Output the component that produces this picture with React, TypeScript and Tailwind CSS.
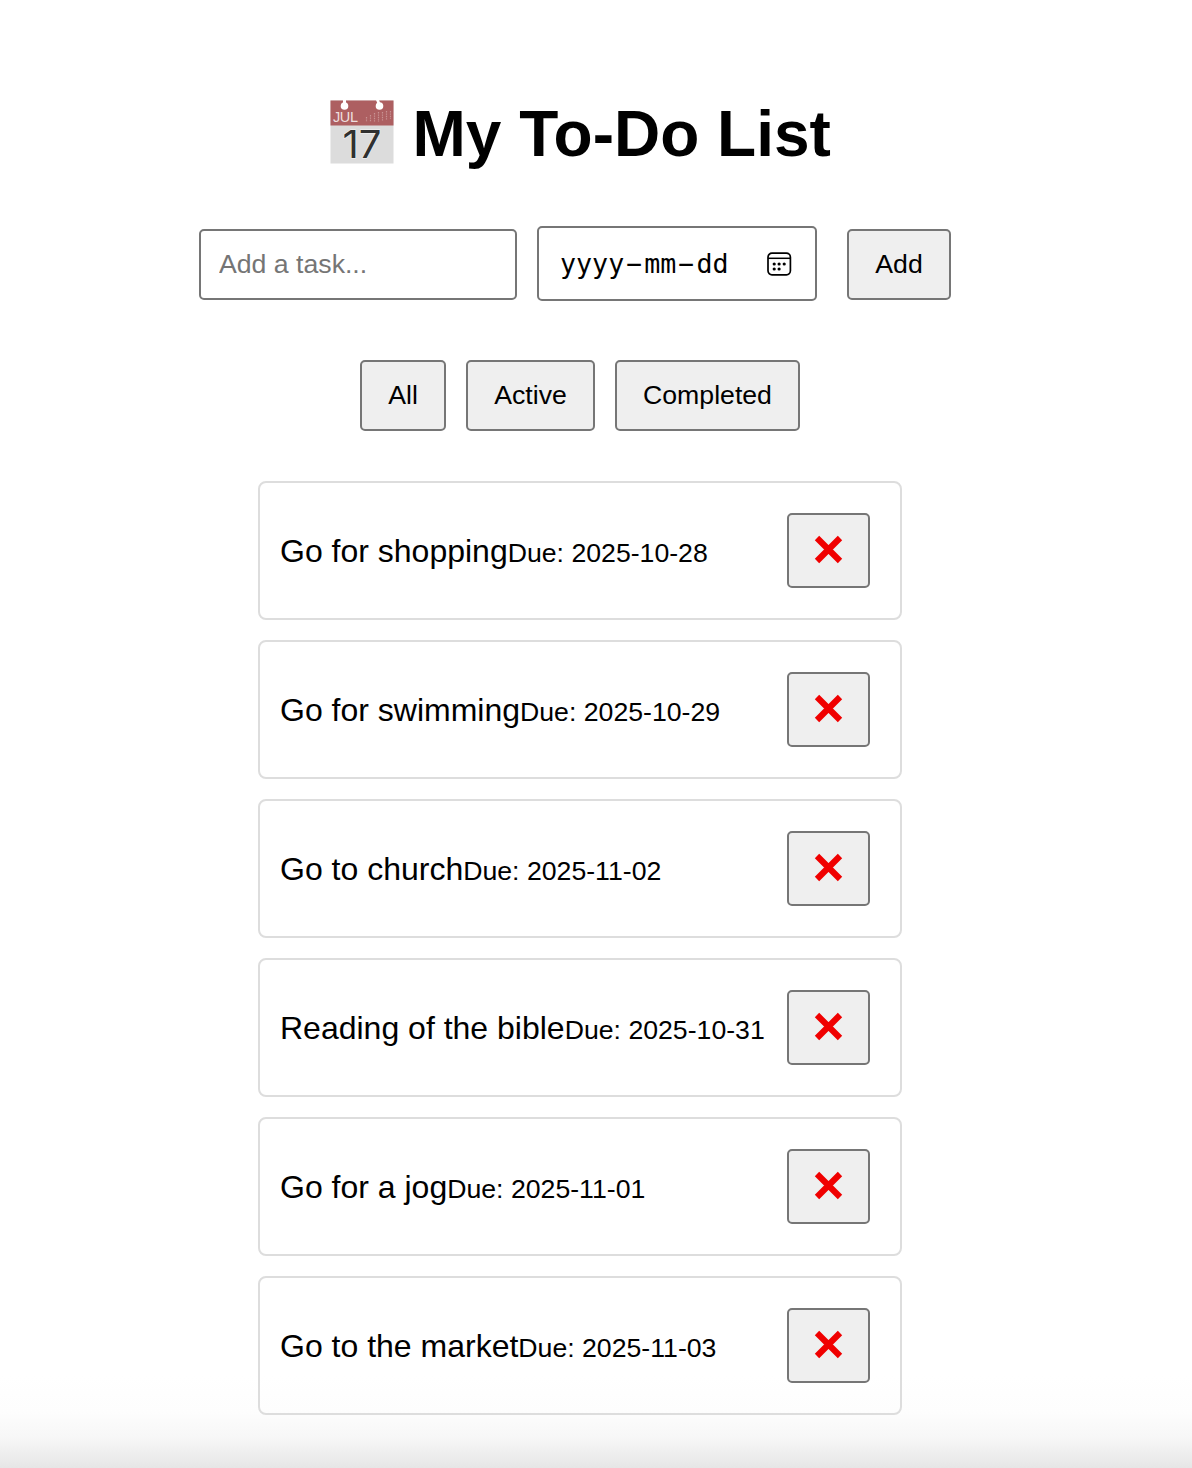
import React from "react";

const tasks = [
  { title: "Go for shopping", due: "2025-10-28" },
  { title: "Go for swimming", due: "2025-10-29" },
  { title: "Go to church", due: "2025-11-02" },
  { title: "Reading of the bible", due: "2025-10-31" },
  { title: "Go for a jog", due: "2025-11-01" },
  { title: "Go to the market", due: "2025-11-03" },
];

const buttonBase =
  "flex shrink-0 items-center justify-center rounded-[5px] border-2 border-[#767676] bg-[#efefef] pb-0.5 text-[26.67px] leading-[30px] text-black";

function CalendarBadge() {
  return (
    <svg className="mt-[10px] h-16 w-16 shrink-0 font-normal leading-none" viewBox="0 0 64 64" aria-hidden="true">
      <rect x="0.5" y="0.5" width="63" height="63" fill="#dcdcdc" />
      <rect x="0.5" y="0.5" width="63" height="25" fill="#ad5f61" />
      <path d="M13 0h3v4h-3zM46 0h3l2 5h-3z" fill="#fff" />
      <circle cx="14.5" cy="6" r="3.8" fill="#fff" />
      <circle cx="49.5" cy="6" r="3.8" fill="#fff" />
      <text x="3" y="21.8" fontSize="14.5" fontWeight="400" textLength="25" fill="#eedede" fontFamily="Liberation Sans, sans-serif">JUL</text>
      <g stroke="#c99394" strokeWidth="1.2" strokeDasharray="1.4 1">
        <path d="M36.5 17v5M40.5 15v7M44.5 13v9M48.5 12v10M52.5 12v9M56.5 11v9M60.5 11v8" />
      </g>
      <text x="12.5" y="57.8" fontSize="37.5" fontWeight="400" textLength="39" lengthAdjust="spacingAndGlyphs" fill="#303030" stroke="#f4f4f4" strokeWidth="1" paintOrder="stroke" fontFamily="Inter, sans-serif">17</text>
    </svg>
  );
}

function DateIcon() {
  return (
    <svg className="h-6 w-[26px]" viewBox="0 0 26 24" fill="none" stroke="#000" aria-hidden="true">
      <rect x="2" y="1.2" width="22.4" height="21.6" rx="4" strokeWidth="1.7" />
      <path d="M2 6.3h22.4" strokeWidth="1.5" />
      <g fill="#000" stroke="none">
        <circle cx="8.2" cy="12" r="1.6" />
        <circle cx="13.1" cy="12" r="1.6" />
        <circle cx="18.2" cy="12" r="1.6" />
        <circle cx="8.2" cy="17" r="1.6" />
        <circle cx="13.1" cy="17" r="1.6" />
      </g>
    </svg>
  );
}

export default function App() {
  return (
    <div className="h-[1468px] w-[1192px] overflow-hidden bg-[linear-gradient(to_bottom,#fff_1375px,#fdfdfd_1412px,#f7f7f7_1438px,#e6e6e6_1468px)] font-['Liberation_Sans',Arial,sans-serif] text-black">
      <main className="flex w-[1160px] flex-col items-center pt-[90px]">
        <h1 className="flex h-[88px] w-[500px] items-start gap-[18.5px] text-[64px] font-bold leading-[88px]">
          <CalendarBadge />
          <span className="whitespace-nowrap">My To-Do List</span>
        </h1>

        <form className="mt-[48px] ml-[199px] flex h-[75px] w-[752px] items-end self-start pb-px" onSubmit={(e) => e.preventDefault()}>
          <input
            className="h-[71px] w-[318px] rounded-[5px] border-2 border-[#767676] bg-white px-[18px] text-[26.67px] outline-none placeholder:text-[#757575]"
            placeholder="Add a task..."
          />
          <div className="-mb-px ml-5 flex h-[75px] w-[280px] items-center justify-between rounded-[5px] border-2 border-[#767676] bg-white pl-[21px] pr-[23px]">
            <span className="flex gap-[2px] whitespace-pre font-['DejaVu_Sans_Mono',monospace] text-[26.67px] leading-8">
              <span>yyyy</span>
              <span className="-mt-px scale-x-[2]">-</span>
              <span>mm</span>
              <span className="-mt-px scale-x-[2]">-</span>
              <span>dd</span>
            </span>
            <DateIcon />
          </div>
          <button className={`${buttonBase} ml-[30px] h-[71px] w-[104px]`}>Add</button>
        </form>

        <div className="mt-[59px] flex gap-5">
          <button className={`${buttonBase} h-[71px] w-[86px]`}>All</button>
          <button className={`${buttonBase} h-[71px] w-[129px]`}>Active</button>
          <button className={`${buttonBase} h-[71px] w-[185px]`}>Completed</button>
        </div>

        <ul className="mt-[50px] flex w-[644px] flex-col gap-5">
          {tasks.map((task) => (
            <li key={task.title} className="flex h-[139px] items-center justify-between rounded-lg border-2 border-[#ddd] pl-5 pr-[30px]">
              <span className="whitespace-nowrap pt-0.5 text-[32px] leading-9">
                {task.title}
                <small className="text-[26.67px]">Due: {task.due}</small>
              </span>
              <button className={`${buttonBase} h-[75px] w-[83px]`} aria-label="Delete task">
                <svg className="mr-px h-[29px] w-[29px]" viewBox="0 0 29 29" aria-hidden="true">
                  <path d="M3 3 26 26M26 3 3 26" stroke="#f00000" strokeWidth="6.2" />
                </svg>
              </button>
            </li>
          ))}
        </ul>
      </main>
    </div>
  );
}
